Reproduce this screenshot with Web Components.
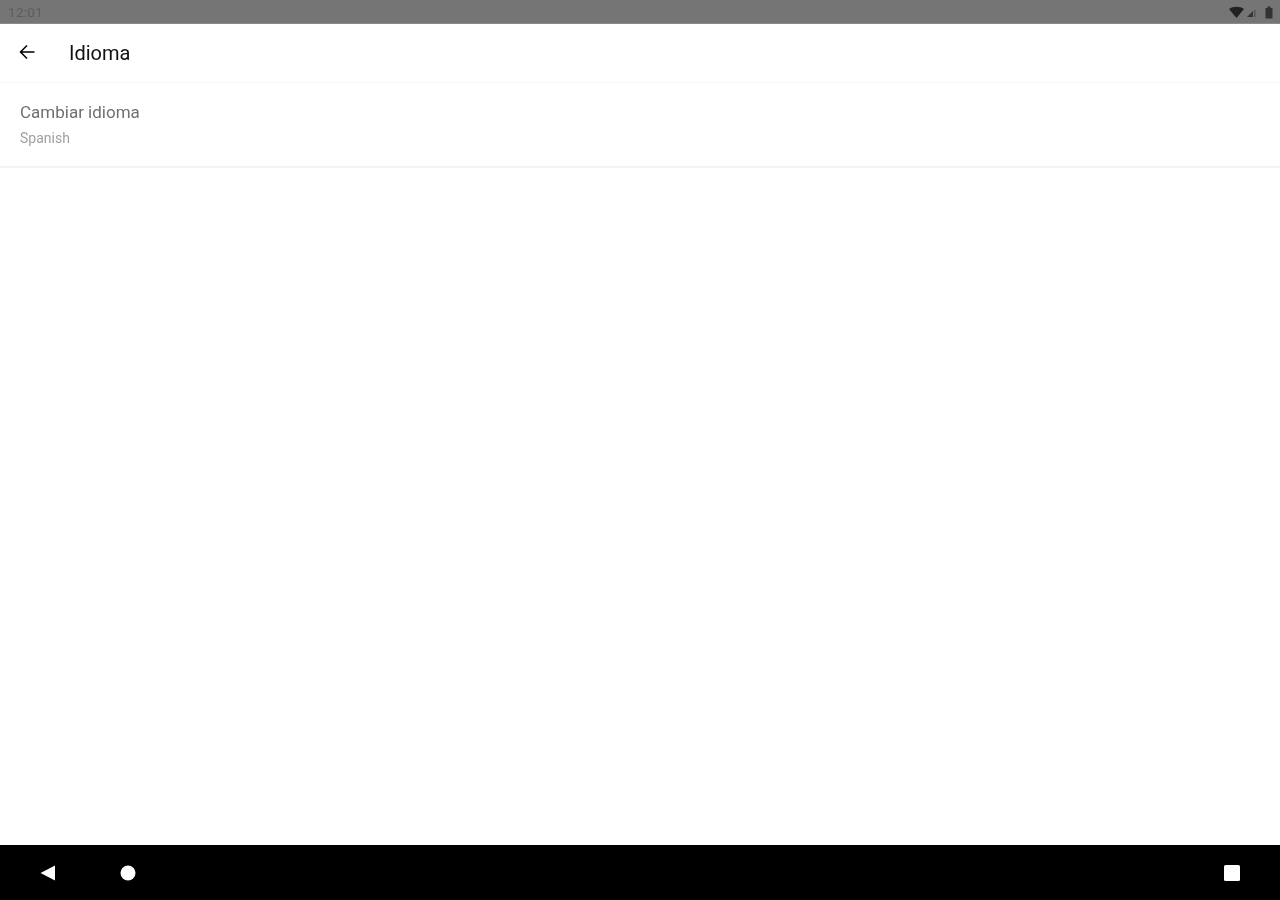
<!DOCTYPE html>
<html lang="es">
<head>
<meta charset="utf-8">
<title>Idioma</title>
<style>
  html, body { margin: 0; height: 100%; }
  body { overflow: hidden; background: #fff; font-family: Roboto, "Liberation Sans", sans-serif; }
</style>
</head>
<body>
<app-screen>
  <status-bar slot="top" time="12:01"></status-bar>
  <app-toolbar slot="top" title="Idioma"></app-toolbar>
  <setting-row title="Cambiar idioma" value="Spanish"></setting-row>
  <nav-bar slot="bottom"></nav-bar>
</app-screen>

<script>
class AppScreen extends HTMLElement {
  constructor() {
    super();
    this.attachShadow({ mode: "open" });
    this.shadowRoot.innerHTML = `
      <style>
        :host { display: flex; flex-direction: column; height: 900px; width: 1280px; }
        main { flex: 1; min-height: 0; background: #fff; }
      </style>
      <slot name="top"></slot>
      <main><slot></slot></main>
      <slot name="bottom"></slot>
    `;
  }
}

class StatusBar extends HTMLElement {
  constructor() {
    super();
    this.attachShadow({ mode: "open" });
    this.shadowRoot.innerHTML = `
      <style>
        :host {
          display: flex;
          align-items: center;
          justify-content: space-between;
          box-sizing: border-box;
          height: 24px;
          padding: 1px 7px 0 8px;
          background: #757575;
          border-bottom: 1px solid #8a8a8a;
        }
        span { font-size: 13.5px; letter-spacing: 0.3px; color: #5c5c5c; filter: blur(0.7px); }
        .icons { display: flex; align-items: center; filter: blur(0.7px); }
        svg { display: block; fill: #222; }
        .signal { margin-left: 2px; }
        .battery { margin-left: 9px; }
      </style>
      <span id="time"></span>
      <div class="icons">
        <svg width="15" height="12" viewBox="0 0 15 12"><path d="M0 3 C4 0 11 0 15 3 L7.5 12 Z"/></svg>
        <svg class="signal" width="10" height="12" viewBox="0 0 10 12"><path d="M1 11 L7 5 V11 Z" fill="#333"/><path d="M8 4 H9.5 V11 H8 Z" fill="#555"/></svg>
        <svg class="battery" width="8" height="13" viewBox="0 0 8 13"><path d="M0.5 2 H2.5 V0.5 H5.5 V2 H7.5 V12.5 H0.5 Z" fill="#333"/></svg>
      </div>
    `;
    this.shadowRoot.querySelector("#time").textContent = this.getAttribute("time");
  }
}

class AppToolbar extends HTMLElement {
  constructor() {
    super();
    this.attachShadow({ mode: "open" });
    this.shadowRoot.innerHTML = `
      <style>
        :host {
          display: flex;
          align-items: center;
          box-sizing: border-box;
          height: 59px;
          padding: 0 0 0 18px;
          background: #fff;
          border-bottom: 1px solid #f7f7f7;
        }
        svg { display: block; flex-shrink: 0; margin-top: -2px; filter: blur(0.6px); }
        h1 {
          margin: 0 0 0 33px;
          font-size: 20px;
          line-height: 24px;
          font-weight: 400;
          color: #111;
          filter: blur(0.6px);
        }
      </style>
      <svg width="18" height="18" viewBox="0 0 18 18" fill="none" stroke="#000" stroke-width="1.5">
        <path d="M16.5 9 H2.5 M9 2.5 L2.5 9 L9 15.5"/>
      </svg>
      <h1></h1>
    `;
    this.shadowRoot.querySelector("h1").textContent = this.getAttribute("title");
  }
}

class SettingRow extends HTMLElement {
  constructor() {
    super();
    this.attachShadow({ mode: "open" });
    this.shadowRoot.innerHTML = `
      <style>
        :host {
          display: flex;
          flex-direction: column;
          box-sizing: border-box;
          height: 85px;
          padding: 19px 20px 0;
          border-bottom: 2px solid #f4f4f4;
        }
        .title { font-size: 17px; line-height: 20px; color: #707070; filter: blur(0.6px); }
        .value { margin-top: 8px; font-size: 14px; line-height: 16px; color: #a0a0a0; filter: blur(0.6px); }
      </style>
      <div class="title"></div>
      <div class="value"></div>
    `;
    this.shadowRoot.querySelector(".title").textContent = this.getAttribute("title");
    this.shadowRoot.querySelector(".value").textContent = this.getAttribute("value");
  }
}

class NavBar extends HTMLElement {
  constructor() {
    super();
    this.attachShadow({ mode: "open" });
    this.shadowRoot.innerHTML = `
      <style>
        :host {
          display: flex;
          align-items: center;
          box-sizing: border-box;
          height: 55px;
          padding: 0 39px;
          background: #000;
        }
        svg { display: block; fill: #fff; filter: blur(0.5px); }
        .home { margin-left: 63px; }
        .recent { margin-left: auto; }
      </style>
      <svg width="18" height="18" viewBox="0 0 18 18"><path d="M1.5 9 L16 1.5 V16.5 Z"/></svg>
      <svg class="home" width="16" height="16" viewBox="0 0 16 16"><circle cx="8" cy="8" r="7.5"/></svg>
      <svg class="recent" width="18" height="18" viewBox="0 0 18 18"><rect x="1" y="1" width="16" height="16" rx="1.5"/></svg>
    `;
  }
}

customElements.define("app-screen", AppScreen);
customElements.define("status-bar", StatusBar);
customElements.define("app-toolbar", AppToolbar);
customElements.define("setting-row", SettingRow);
customElements.define("nav-bar", NavBar);
</script>
</body>
</html>
